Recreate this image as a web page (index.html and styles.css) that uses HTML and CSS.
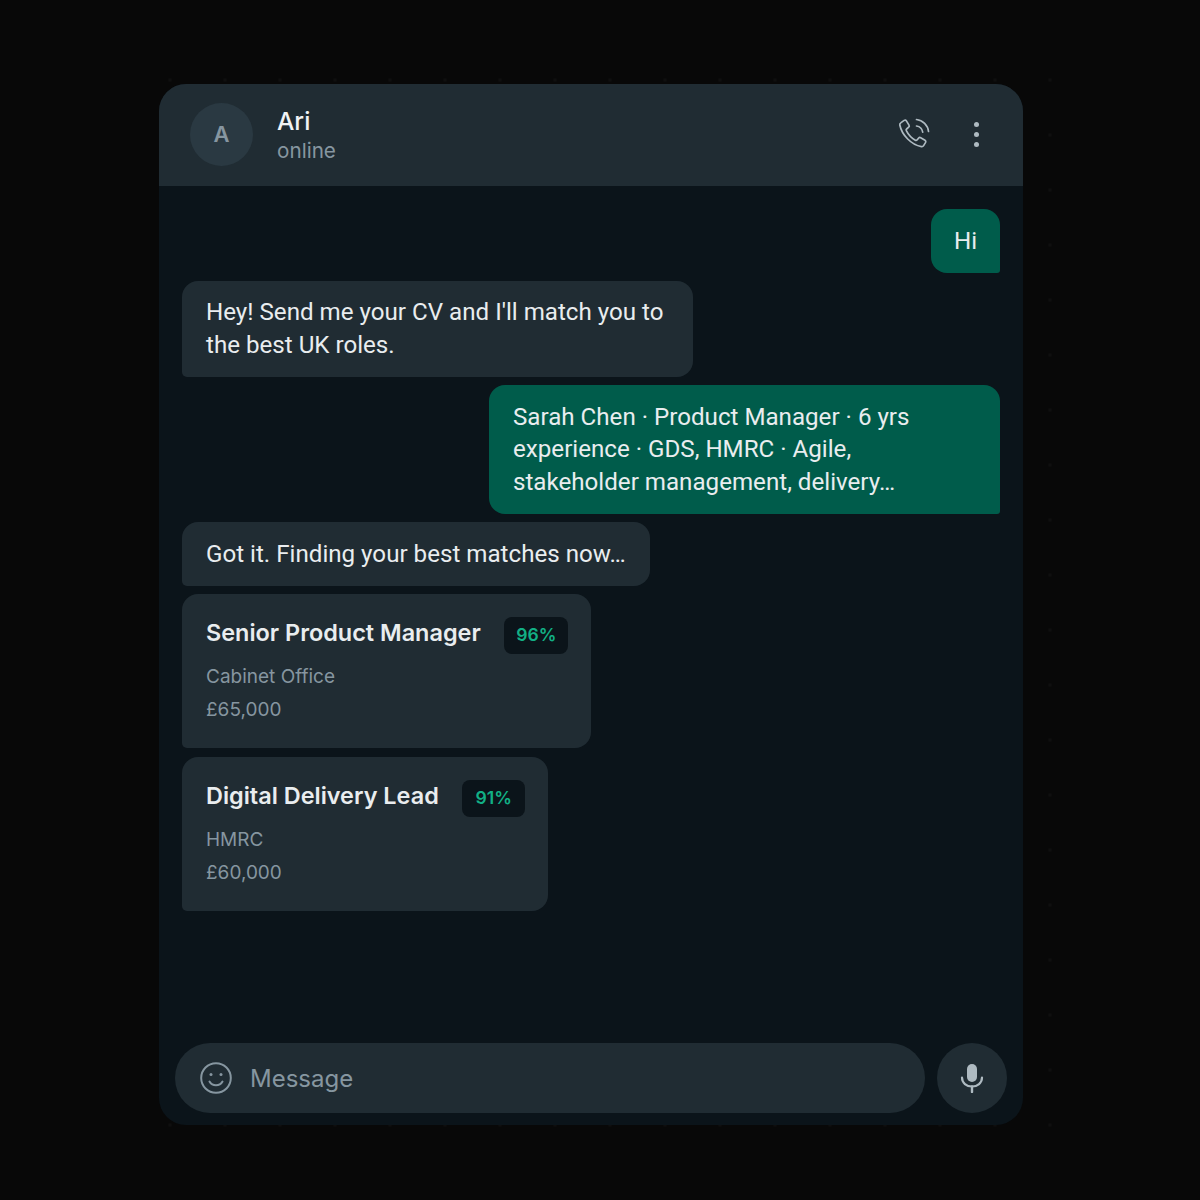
FILE: index.html
```html
<!DOCTYPE html>
<html lang="en">
<head>
    <meta charset="UTF-8">
    <title>Ari chat</title>
    <link rel="stylesheet" href="styles.css">
</head>
<body>
    <div class="backdrop">
        <div class="chat">
            <header class="chat-header">
                <div class="avatar">A</div>
                <div class="contact">
                    <div class="contact-name">Ari</div>
                    <div class="contact-status">online</div>
                </div>
                <svg class="icon-call" viewBox="0 0 32 32" fill="none" stroke="currentColor" stroke-width="1.7" stroke-linecap="round" stroke-linejoin="round">
                    <path d="M3 4.600 6.200 2.400c.8-.5 1.700-.3 2.200.5l2.600 4.200c.4.7.3 1.500-.3 2L8.600 11c-.5.4-.6 1-.3 1.600 1.900 3.700 5.300 7.500 9 9.600.6.300 1.200.3 1.700-.2l1.700-2c.5-.6 1.300-.7 2-.3l4.300 2.500c.8.500 1 1.400.6 2.200l-2 3.200c-.5.800-1.300 1.200-2.200 1C13.500 27 3.900 17.200 1.800 7c-.2-.9.400-1.900 1.200-2.400Z"/>
                    <path d="M18.500 8c3.300.5 5.700 3 6.200 6.200"/>
                    <path d="M18.500 1.500c6.200.6 11.400 5.800 12 12"/>
                </svg>
                <div class="icon-more"><span></span><span></span><span></span></div>
            </header>

            <main class="messages">
                <div class="bubble out short">Hi</div>
                <div class="bubble in">Hey! Send me your CV and I'll match you to the best UK roles.</div>
                <div class="bubble out wide">Sarah Chen · Product Manager · 6 yrs experience · GDS, HMRC · Agile, stakeholder management, delivery…</div>
                <div class="bubble in">Got it. Finding your best matches now…</div>
                <div class="job-card">
                    <div class="job-top">
                        <div class="job-title">Senior Product Manager</div>
                        <div class="job-score">96%</div>
                    </div>
                    <div class="job-meta">Cabinet Office</div>
                    <div class="job-meta">£65,000</div>
                </div>
                <div class="job-card">
                    <div class="job-top">
                        <div class="job-title">Digital Delivery Lead</div>
                        <div class="job-score">91%</div>
                    </div>
                    <div class="job-meta">HMRC</div>
                    <div class="job-meta">£60,000</div>
                </div>
            </main>

            <footer class="composer">
                <div class="input">
                    <svg class="icon-emoji" viewBox="0 0 32 32" fill="none" stroke="currentColor" stroke-width="2" stroke-linecap="round">
                        <circle cx="16" cy="16" r="14.800"/>
                        <path d="M9.500 19.500c1.500 2.600 3.800 3.800 6.500 3.800s5-1.200 6.500-3.800"/>
                        <circle cx="11" cy="12.500" r="1.500" fill="currentColor" stroke="none"/>
                        <circle cx="21" cy="12.500" r="1.500" fill="currentColor" stroke="none"/>
                    </svg>
                    <span class="placeholder">Message</span>
                </div>
                <div class="mic">
                    <svg viewBox="0 0 24 30" fill="none">
                        <rect x="7" y="1" width="10" height="18" rx="5" fill="currentColor"/>
                        <path d="M2 14.500c0 5.500 4.500 9 10 9s10-3.500 10-9" stroke="currentColor" stroke-width="2.200" stroke-linecap="round"/>
                        <path d="M12 23.500V29" stroke="currentColor" stroke-width="2.400" stroke-linecap="round"/>
                    </svg>
                </div>
            </footer>
        </div>
    </div>
</body>
</html>
```

FILE: styles.css
```css
html, body {
    height: 100%;
}

body {
    margin: 0;
    padding: 70px 0 0 145px;
    box-sizing: border-box;
    background: #080808;
    font-family: Inter, "Liberation Sans", sans-serif;
    color: #e9edef;
}

/* faint dot grid behind the window */
.backdrop {
    width: 910px;
    height: 1065px;
    padding: 14px 32px 10px 14px;
    box-sizing: border-box;
    background-image: radial-gradient(circle, #0f0f0f 1.500px, transparent 2px);
    background-size: 55px 55px;
    background-position: -2.500px -17.500px;
}

.chat {
    width: 864px;
    height: 1041px;
    background: #0b141a;
    border-radius: 27px;
    overflow: hidden;
    display: flex;
    flex-direction: column;
}

.chat-header {
    height: 102px;
    flex: none;
    background: #202c33;
    display: flex;
    align-items: center;
    padding: 0 44px 2px 31px;
    box-sizing: border-box;
}

.avatar {
    width: 63px;
    height: 63px;
    border-radius: 50%;
    background: #2a3942;
    color: #8696a0;
    font-size: 22px;
    font-weight: 600;
    display: flex;
    align-items: center;
    justify-content: center;
}

.contact {
    margin: 1px 0 0 24px;
    flex: 1;
}

.contact-name {
    font-size: 24.500px;
    font-weight: 500;
    line-height: 32px;
    color: #f1f3f4;
}

.contact-status {
    font-size: 20.700px;
    line-height: 28px;
    color: #8696a0;
}

.icon-call {
    width: 32px;
    height: 32px;
    color: #aebac1;
    margin-right: 44px;
}

.icon-more {
    display: flex;
    flex-direction: column;
    gap: 5px;
}

.icon-more span {
    width: 5px;
    height: 5px;
    border-radius: 50%;
    background: #aebac1;
}

.messages {
    flex: 1;
    display: flex;
    flex-direction: column;
    align-items: flex-start;
    gap: 8px;
    padding: 23px 23px;
}

.bubble {
    box-sizing: border-box;
    font-family: Roboto, "Liberation Sans", sans-serif;
    font-size: 24.150px;
    line-height: 32.600px;
    padding: 15.600px 24px;
    border-radius: 16px;
    background: #202c33;
    border-bottom-left-radius: 5px;
}

.bubble.out {
    align-self: flex-end;
    background: #005c4b;
    border-radius: 16px;
    border-bottom-right-radius: 3px;
}

.bubble.short {
    padding-left: 23px;
    padding-right: 23px;
}

.bubble.in {
    max-width: 511px;
}

.bubble.wide {
    width: 511px;
}

.job-card {
    background: #202c33;
    border-radius: 16px;
    border-bottom-left-radius: 5px;
    padding: 23px 23px 22px 24px;
}

.job-card + .job-card {
    margin-top: 0.200px;
}

.job-top {
    display: flex;
    align-items: flex-start;
    gap: 23.500px;
    margin-bottom: 6.500px;
}

.job-title {
    font-size: 23.450px;
    font-weight: 600;
    line-height: 32px;
}

.job-score {
    background: #0b141a;
    color: #12b085;
    font-size: 17.600px;
    font-weight: 600;
    padding: 6.500px 12px;
    min-width: 39px;
    text-align: center;
    line-height: 24px;
    border-radius: 8px;
}

.job-meta {
    font-size: 19px;
    line-height: 33px;
    color: #8696a0;
}

.composer {
    flex: none;
    display: flex;
    align-items: center;
    gap: 12px;
    padding: 0 16px 12px;
}

.input {
    flex: 1;
    height: 70px;
    background: #202c33;
    border-radius: 35px;
    display: flex;
    align-items: center;
    padding-left: 25px;
}

.icon-emoji {
    width: 32px;
    height: 32px;
    color: #8696a0;
}

.placeholder {
    margin-left: 18px;
    font-size: 24px;
    color: #8696a0;
}

.mic {
    width: 70px;
    height: 70px;
    border-radius: 50%;
    background: #202c33;
    color: #aebac1;
    display: flex;
    align-items: center;
    justify-content: center;
}

.mic svg {
    width: 24px;
    height: 30px;
}
```
